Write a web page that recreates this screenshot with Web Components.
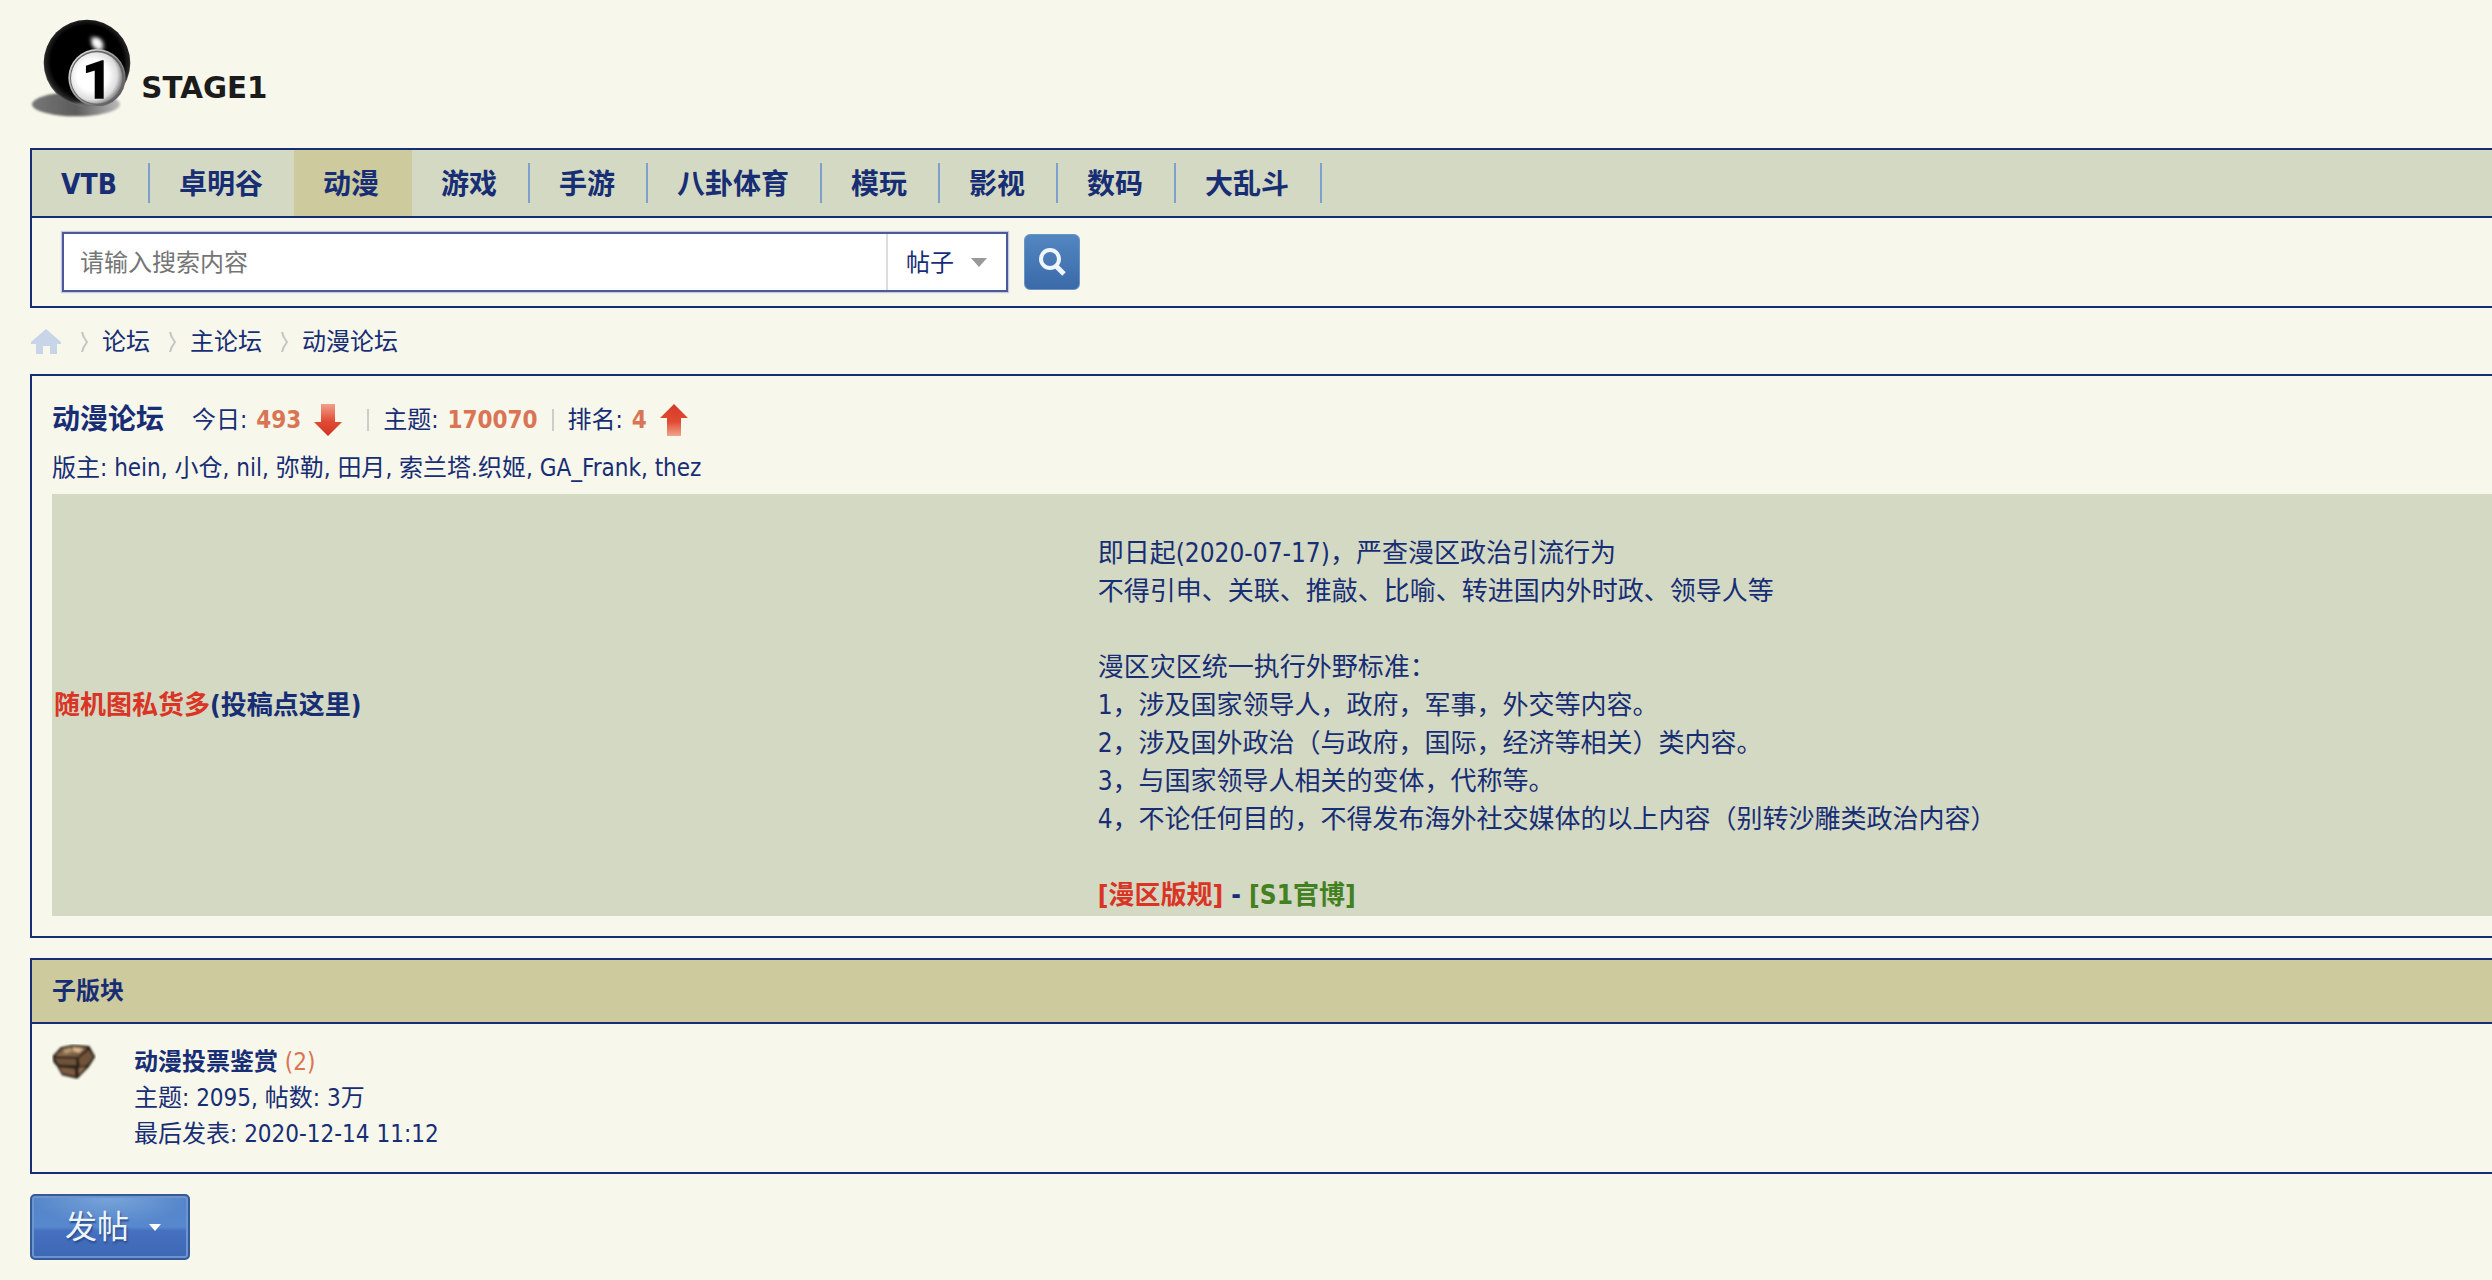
<!DOCTYPE html>
<html lang="zh-CN">
<head>
<meta charset="utf-8">
<title>动漫论坛 - STAGE1</title>
<style>
    html {
        --ink: #172e75;
        --page: #f7f7eb;
        --sage: #d4d9c3;
        --sand: #cdca9d;
        --accent: #d97455;
    }
    body {
        margin: 0;
        padding: 10px 0 20px 30px;
        overflow-x: hidden;
        background: var(--page);
        color: var(--ink);
        font: 24px/36px "DejaVu Sans Condensed", "Noto Sans CJK SC", sans-serif;
    }
</style>
</head>
<body>
    <s1-logo></s1-logo>
    <s1-panel>
        <s1-nav slot="head">
            <s1-nav-item>VTB</s1-nav-item>
            <s1-nav-item plain>卓明谷</s1-nav-item>
            <s1-nav-item active>动漫</s1-nav-item>
            <s1-nav-item>游戏</s1-nav-item>
            <s1-nav-item>手游</s1-nav-item>
            <s1-nav-item>八卦体育</s1-nav-item>
            <s1-nav-item>模玩</s1-nav-item>
            <s1-nav-item>影视</s1-nav-item>
            <s1-nav-item>数码</s1-nav-item>
            <s1-nav-item>大乱斗</s1-nav-item>
        </s1-nav>
        <s1-search></s1-search>
    </s1-panel>
    <s1-breadcrumb></s1-breadcrumb>
    <s1-panel>
        <s1-forum-info>
            <s1-notice></s1-notice>
        </s1-forum-info>
    </s1-panel>
    <s1-panel spaced>
        <s1-section-title slot="head">子版块</s1-section-title>
        <s1-subforum></s1-subforum>
    </s1-panel>
    <s1-post-button>发帖</s1-post-button>

<script>
class BaseElement extends HTMLElement {
    constructor() {
        super();
        this.attachShadow({ mode: 'open' });
    }

    connectedCallback() {
        this.shadowRoot.innerHTML = `
            <style>
                :host { display: block; }
                a { color: inherit; text-decoration: none; }
                a:hover { text-decoration: underline; }
                svg { display: block; }
            </style>
            ${this.template()}
        `;
    }
}

class S1Logo extends BaseElement {
    template() {
        return `
            <style>
                :host { margin-bottom: 18px; margin-left: -10px; }
                a { display: inline-block; vertical-align: top; }
            </style>
            <a href="#" aria-label="STAGE1">
                <svg width="270" height="120" viewBox="0 0 810 360">
                    <defs>
                        <radialGradient id="ball" cx=".5" cy=".48" r=".52">
                            <stop offset=".8" stop-color="#000"/>
                            <stop offset=".94" stop-color="#262626"/>
                            <stop offset="1" stop-color="#777"/>
                        </radialGradient>
                        <radialGradient id="face" cx=".42" cy=".45" r=".6">
                            <stop offset=".5" stop-color="#fff"/>
                            <stop offset=".8" stop-color="#ddd"/>
                            <stop offset="1" stop-color="#777"/>
                        </radialGradient>
                        <linearGradient id="shade" x1="0" x2="1">
                            <stop offset="0" stop-color="#777"/>
                            <stop offset=".5" stop-color="#5c5c5c"/>
                            <stop offset="1" stop-color="#bbb"/>
                        </linearGradient>
                        <linearGradient id="rim" x1="0" y1="0" x2="1" y2="1">
                            <stop offset="0" stop-color="#eee"/>
                            <stop offset="1" stop-color="#444"/>
                        </linearGradient>
                        <filter id="soft"><feGaussianBlur stdDeviation="3"/></filter>
                        <filter id="glow" x="-1" y="-1" width="3" height="3"><feGaussianBlur stdDeviation="6"/></filter>
                    </defs>
                    <ellipse cx="168" cy="283" rx="132" ry="36" fill="url(#shade)" filter="url(#soft)"/>
                    <circle cx="201" cy="159" r="130" fill="url(#ball)"/>
                    <path d="M128 258 Q190 300 262 262 Q220 292 180 286 Z" fill="#777" filter="url(#soft)"/>
                    <path d="M212 82 Q238 82 250 100 L248 122 L228 120 Z" fill="#eee" filter="url(#glow)"/>
                    <ellipse cx="229" cy="98" rx="12" ry="12" fill="#fff" filter="url(#glow)"/>
                    <circle cx="231" cy="203" r="86" fill="url(#rim)"/>
                    <circle cx="231" cy="203" r="81" fill="#666"/>
                    <circle cx="230" cy="204" r="77" fill="url(#face)"/>
                    <text x="232" y="264" text-anchor="middle" font-family="Roboto" font-weight="700" font-size="156" fill="#000" stroke="#000" stroke-width="5">1</text>
                    <text x="364" y="264" font-family="DejaVu Sans" font-weight="700" font-size="88" fill="#1b1b1b">STAGE1</text>
                </svg>
            </a>
        `;
    }
}

/* Bordered box that runs off to the right edge, with an optional head row */
class S1Panel extends BaseElement {
    template() {
        return `
            <style>
                :host { border: 2px solid var(--ink); border-right: 0; }
                :host([spaced]) { margin-top: 20px; }
                ::slotted([slot="head"]) { border-bottom: 2px solid var(--ink); }
            </style>
            <slot name="head"></slot>
            <slot></slot>
        `;
    }
}

class S1Nav extends BaseElement {
    template() {
        return `
            <style>
                :host { background: var(--sage); }
                nav { display: flex; height: 66px; }
            </style>
            <nav><slot></slot></nav>
        `;
    }
}

class S1NavItem extends BaseElement {
    template() {
        return `
            <style>
                :host {
                    display: flex;
                    align-items: center;
                    white-space: nowrap;
                    font-size: 28px;
                    font-weight: 700;
                }
                a { padding: 4px 31px 0 29px; }
                :host::after {
                    content: "";
                    width: 2px;
                    height: 40px;
                    background: #7f9fcd;
                }
                :host([active]) { background: var(--sand); }
                :host([active])::after { background: none; }
                :host([plain])::after { display: none; }
            </style>
            <a href="#"><slot></slot></a>
        `;
    }
}

class S1Search extends BaseElement {
    template() {
        return `
            <style>
                form {
                    display: flex;
                    align-items: center;
                    gap: 16px;
                    padding: 14px 30px;
                }
                .field {
                    display: flex;
                    flex: 0 1 946px;
                    box-sizing: border-box;
                    height: 60px;
                    border: 2px solid #4d5899;
                    background: #fff;
                    box-shadow: 0 0 1px 1px #c3cbe0;
                }
                input, select {
                    border: 0;
                    outline: 0;
                    background: none;
                    color: var(--ink);
                    font: inherit;
                }
                input { flex: 1; min-width: 0; padding: 2px 16px 0; }
                input::placeholder { color: #757575; opacity: 1; }
                .type {
                    display: grid;
                    align-items: center;
                    width: 118px;
                    border-left: 2px solid #dcdcdc;
                }
                .type > * { grid-area: 1 / 1; }
                .type svg { justify-self: end; margin-right: 19px; pointer-events: none; }
                select { appearance: none; height: 100%; padding: 2px 18px 0; }
                button {
                    display: grid;
                    place-items: center;
                    width: 56px;
                    height: 56px;
                    padding: 0;
                    border: 1px solid #6d95c4;
                    border-radius: 6px;
                    background: linear-gradient(#5387c1, #3a6aa8);
                }
            </style>
            <form>
                <div class="field">
                    <input type="text" placeholder="请输入搜索内容" aria-label="搜索内容">
                    <div class="type">
                        <select aria-label="类型"><option>帖子</option></select>
                        <svg width="16" height="9" viewBox="0 0 16 9"><path d="M0 0h16L8 9z" fill="#999"/></svg>
                    </div>
                </div>
                <button type="button" aria-label="搜索">
                    <svg width="30" height="30" viewBox="0 0 30 30" fill="none" stroke="#eef5fc">
                        <circle cx="13" cy="12" r="9" stroke-width="4"/>
                        <path d="M19 19l8 8" stroke-width="5"/>
                    </svg>
                </button>
            </form>
        `;
    }
}

class S1Breadcrumb extends BaseElement {
    template() {
        const sep = `<svg class="sep" width="40" height="26" viewBox="0 0 40 26" fill="none" stroke="#c4c6c4" stroke-width="2"><path d="M20 3q1 5 5 10q-4 5 -5 10"/></svg>`;
        return `
            <style>
                nav { display: flex; align-items: center; height: 66px; padding-top: 2px; box-sizing: border-box; }
            </style>
            <nav>
                <a href="#" aria-label="首页">
                    <svg width="32" height="26" viewBox="0 0 32 26"><path d="M16 0l15 13v2h-4v10h-7v-8h-7v8H6V15H1v-2z" fill="#c8d5e8"/></svg>
                </a>
                ${sep}<a href="#">论坛</a>
                ${sep}<a href="#">主论坛</a>
                ${sep}<a href="#">动漫论坛</a>
            </nav>
        `;
    }
}

class S1ForumInfo extends BaseElement {
    template() {
        const mods = ['hein', '小仓', 'nil', '弥勒', '田月', '索兰塔.织姬', 'GA_Frank', 'thez'];
        const arrow = (d, id, from, to) => `
            <svg width="30" height="34" viewBox="0 0 30 34">
                <defs><linearGradient id="${id}" x1="0" x2="0" y1="0" y2="1">
                    <stop offset="0" stop-color="${from}"/><stop offset=".55" stop-color="#e04a32"/><stop offset="1" stop-color="${to}"/>
                </linearGradient></defs>
                <path d="${d}" fill="url(#${id})"/>
            </svg>`;
        return `
            <style>
                :host { padding: 22px 0 20px 20px; }
                .title { display: flex; align-items: center; height: 44px; }
                h1 { margin: 0 28px 0 0; font-size: 28px; }
                .stat { display: flex; align-items: center; white-space: pre; }
                b { margin-left: 2px; color: var(--accent); }
                svg { margin-left: 12px; }
                i { width: 2px; height: 22px; margin: 0 14px; background: #ccc; }
                .wide { margin-left: 24px; }
                p { margin: 0; line-height: 52px; }
            </style>
            <div class="title">
                <h1><a href="#">动漫论坛</a></h1>
                <span class="stat">今日: <b>493</b>${arrow('M8 1h14v18h7L15 33 1 19h7z', 'down', '#f0a08c', '#cf3424')}</span>
                <i class="wide"></i>
                <span class="stat">主题: <b>170070</b></span>
                <i></i>
                <span class="stat">排名: <b>4</b>${arrow('M15 1L29 15h-7v18H8V15H1z', 'up', '#d63a2a', '#f0a48e')}</span>
            </div>
            <p>版主: ${mods.map(name => `<a href="#">${name}</a>`).join(', ')}</p>
            <slot></slot>
        `;
    }
}

class S1Notice extends BaseElement {
    template() {
        return `
            <style>
                :host {
                    display: grid;
                    grid-template-columns: 3fr 4fr;
                    align-items: center;
                    padding: 2px 0;
                    background: var(--sage);
                    font-size: 26px;
                    line-height: 38px;
                }
                .pick { padding-left: 2px; font-weight: 700; }
                .red { color: #da3425; }
                .green { color: #43801f; }
            </style>
            <div class="pick"><a href="#" class="red">随机图私货多</a><a href="#">(投稿点这里)</a></div>
            <div>
                <br>
                即日起(2020-07-17)，严查漫区政治引流行为<br>
                不得引申、关联、推敲、比喻、转进国内外时政、领导人等<br>
                <br>
                漫区灾区统一执行外野标准：<br>
                1，涉及国家领导人，政府，军事，外交等内容。<br>
                2，涉及国外政治（与政府，国际，经济等相关）类内容。<br>
                3，与国家领导人相关的变体，代称等。<br>
                4，不论任何目的，不得发布海外社交媒体的以上内容（别转沙雕类政治内容）<br>
                <br>
                <b><a href="#" class="red">[漫区版规]</a> - <a href="#" class="green">[S1官博]</a></b>
            </div>
        `;
    }
}

class S1SectionTitle extends BaseElement {
    template() {
        return `
            <style>
                :host { background: var(--sand); }
                h2 { margin: 0; padding: 0 20px; font-size: 24px; line-height: 62px; }
            </style>
            <h2><slot></slot></h2>
        `;
    }
}

class S1Subforum extends BaseElement {
    template() {
        return `
            <style>
                :host { display: flex; gap: 38px; padding: 20px; }
                p { margin: 0; }
                .today { color: var(--accent); }
            </style>
            <svg width="44" height="36" viewBox="0 0 132 108">
                <defs>
                    <filter id="soft"><feGaussianBlur stdDeviation="3"/></filter>
                    <linearGradient id="lid" x1="0" x2="1" y1="0" y2="1">
                        <stop offset="0" stop-color="#5d4733"/><stop offset=".5" stop-color="#8a6c50"/><stop offset="1" stop-color="#604833"/>
                    </linearGradient>
                </defs>
                <g filter="url(#soft)">
                    <path d="M2 36L26 10 62 2l50 4 18 32-20 32-34 34-46-10-14-26-12-14z" fill="#2a2018"/>
                    <path d="M10 36L30 15l34-8 42 6-28 26z" fill="url(#lid)"/>
                    <path d="M8 42l64 2 2 20-54-2z" fill="#6f523b"/>
                    <path d="M110 18l14 20-18 24-22 6-4-26z" fill="#705339"/>
                    <path d="M22 70l46 4 2 22-38-8z" fill="#7b5b43"/>
                    <path d="M80 72l22-4-22 26z" fill="#8a6b50"/>
                    <path d="M78 42l30-28M72 96l4-54" stroke="#32251a" stroke-width="5"/>
                    <path d="M32 18l22-7 8 10-22 8z" fill="#b89870"/>
                    <path d="M62 10l32 4-12 12-18-4z" fill="#d8b68c"/>
                </g>
            </svg>
            <div>
                <p><a href="#"><b>动漫投票鉴赏</b></a> <span class="today">(2)</span></p>
                <p>主题: 2095, 帖数: 3万</p>
                <p><a href="#">最后发表: 2020-12-14 11:12</a></p>
            </div>
        `;
    }
}

class S1PostButton extends BaseElement {
    template() {
        return `
            <style>
                :host { margin-top: 20px; }
                button {
                    display: flex;
                    align-items: center;
                    justify-content: center;
                    gap: 20px;
                    width: 160px;
                    height: 66px;
                    padding: 0 0 0 6px;
                    border: 2px solid #365a98;
                    border-radius: 5px;
                    background:
                        radial-gradient(ellipse 80px 30px at 50% 0, #7aa6da, transparent),
                        linear-gradient(#5484c8, #5787cd 50%, #4670c0 56%, #3d68b4);
                    box-shadow: inset 0 0 0 2px #6c95d0;
                    color: #eef4fc;
                    font: inherit;
                    font-size: 32px;
                    text-shadow: 1px 2px 2px #27498a;
                }
            </style>
            <button type="button">
                <slot></slot>
                <svg width="12" height="7" viewBox="0 0 12 7"><path d="M0 0h12L6 7z" fill="#fff"/></svg>
            </button>
        `;
    }
}

customElements.define('s1-logo', S1Logo);
customElements.define('s1-panel', S1Panel);
customElements.define('s1-nav', S1Nav);
customElements.define('s1-nav-item', S1NavItem);
customElements.define('s1-search', S1Search);
customElements.define('s1-breadcrumb', S1Breadcrumb);
customElements.define('s1-forum-info', S1ForumInfo);
customElements.define('s1-notice', S1Notice);
customElements.define('s1-section-title', S1SectionTitle);
customElements.define('s1-subforum', S1Subforum);
customElements.define('s1-post-button', S1PostButton);
</script>
</body>
</html>
